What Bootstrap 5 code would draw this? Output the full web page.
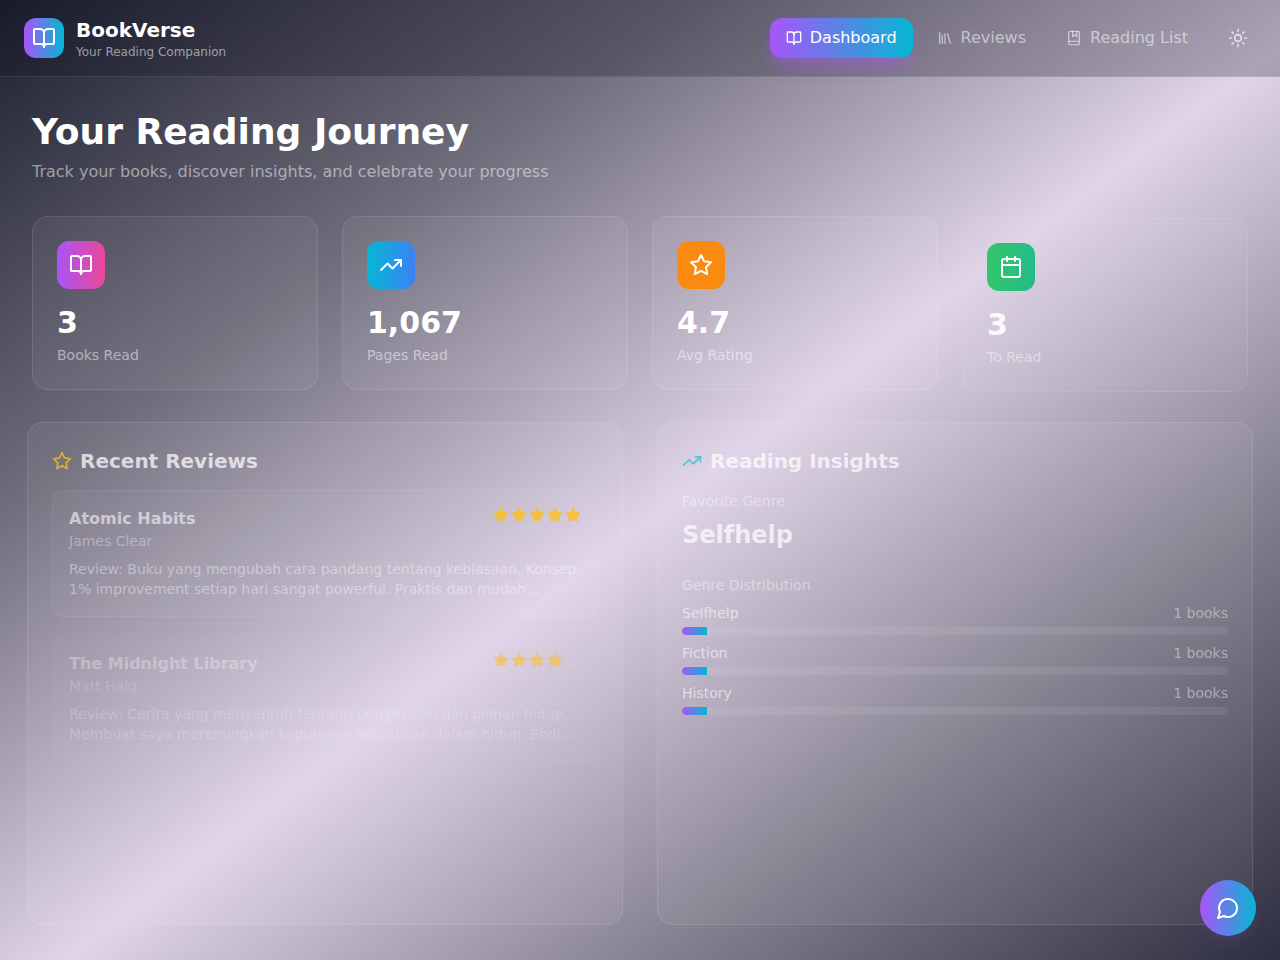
<!DOCTYPE html>
<html lang="en">
<head>
    <meta charset="UTF-8">
    <meta name="viewport" content="width=device-width, initial-scale=1.0">
    <title>BookVerse</title>
    <link href="https://cdn.jsdelivr.net/npm/bootstrap@5.3.0/dist/css/bootstrap.min.css" rel="stylesheet">
    <style>
        html, body { height: 100%; }
        body {
            font-family: "DejaVu Sans", sans-serif;
            color: #fff;
            min-height: 960px;
            overflow: hidden;
            background: linear-gradient(to bottom right, #1c1f2e 0%, #716e7d 27%, #e0d4e8 52.5%, #868291 75%, #2d2e40 100%);
        }
        .ico { fill: none; stroke: currentColor; stroke-width: 2; stroke-linecap: round; stroke-linejoin: round; flex-shrink: 0; }
        .top-bar {
            height: 77px;
            padding: 0 24px;
            background: rgba(15, 15, 30, .25);
            border-bottom: 1px solid rgba(255, 255, 255, .1);
        }
        .logo-box { width: 40px; height: 40px; border-radius: 12px; background: linear-gradient(90deg, #a855f7, #06b6d4); }
        .brand-name { font-size: 20px; font-weight: 700; line-height: 28px; }
        .brand-sub { font-size: 12px; line-height: 16px; color: rgba(255, 255, 255, .55); }
        .top-bar .nav-link {
            height: 40px;
            padding: 0 16px;
            border-radius: 12px;
            font-size: 16px;
            color: rgba(255, 255, 255, .55);
        }
        .top-bar .nav-link.active {
            color: #fff;
            background: linear-gradient(90deg, #a855f7, #06b6d4);
            box-shadow: 0 10px 15px -3px rgba(168, 85, 247, .5);
        }
        .theme-btn { width: 36px; height: 36px; margin-left: 8px; color: rgba(255, 255, 255, .7); }
        .page-main { padding: 32px 32px 35px; }
        .page-title { font-size: 36px; line-height: 45px; font-weight: 700; margin-bottom: 6px; }
        .page-sub { font-size: 16px; line-height: 24px; color: rgba(255, 255, 255, .5); margin-bottom: 32px; }
        .glass-box {
            background: rgba(255, 255, 255, .05);
            border: 1px solid rgba(255, 255, 255, .1);
            border-radius: 16px;
        }
        .stat-box { padding: 24px; height: 174px; }
        .stat-late { transform: translateY(2px); opacity: .9; }
        .stat-ico { width: 48px; height: 48px; border-radius: 12px; margin-bottom: 16px; }
        .ico-purple { background: linear-gradient(90deg, #a855f7, #ec4899); }
        .ico-blue { background: linear-gradient(90deg, #06b6d4, #3b82f6); }
        .ico-orange { background: #fb8a10; }
        .ico-green { background: linear-gradient(90deg, #22c55e, #10b981); }
        .stat-value { font-size: 30px; line-height: 36px; font-weight: 700; margin-bottom: 4px; }
        .stat-label { font-size: 14px; line-height: 20px; color: rgba(255, 255, 255, .5); }
        .panel-row { margin-top: 32px; }
        .panel-box { padding: 24px; height: 503px; }
        .panel-left { transform: translateX(-5px); }
        .panel-right { transform: translateX(5px); }
        .panel-title { font-size: 20px; line-height: 28px; font-weight: 700; margin: 0 0 15px; color: rgba(255, 255, 255, .72); }
        .title-star { color: #fbbf24; opacity: .8; }
        .title-trend { color: #2bc4d4; opacity: .8; }
        .review-box {
            padding: 16px;
            height: 127px;
            margin-bottom: 18px;
            background: rgba(255, 255, 255, .03);
            border: 1px solid rgba(255, 255, 255, .06);
            border-radius: 12px;
        }
        .review-first { --txt: .56; --star: .85; }
        .review-second { --txt: .29; --star: .55; background: rgba(255, 255, 255, .015); border-color: rgba(255, 255, 255, .03); }
        .review-name { font-size: 16px; line-height: 24px; font-weight: 700; opacity: var(--txt); }
        .review-author { font-size: 14px; line-height: 20px; color: rgba(255, 255, 255, .6); margin-bottom: 8px; opacity: var(--txt); }
        .review-text { font-size: 14px; line-height: 20px; color: rgba(255, 255, 255, .7); margin: 0; opacity: var(--txt); }
        .star-row { gap: 2px; opacity: var(--star); }
        .star-on { color: #fbbf24; fill: #fbbf24; }
        .star-off { color: rgba(255, 255, 255, .12); }
        .small-label { font-size: 14px; line-height: 20px; color: rgba(255, 255, 255, .42); }
        .insight-top { margin-top: 16px; }
        .genre-fav { font-size: 24px; line-height: 32px; font-weight: 700; margin: 8px 0 24px; color: rgba(255, 255, 255, .72); }
        .genre-line { font-size: 14px; line-height: 20px; }
        .genre-name { color: rgba(255, 255, 255, .58); }
        .genre-count { color: rgba(255, 255, 255, .42); }
        .genre-track { height: 8px; border-radius: 4px; overflow: hidden; background: rgba(255, 255, 255, .08); margin: 4px 0 8px; }
        .genre-fill { height: 100%; border-radius: 4px 0 0 4px; background: linear-gradient(90deg, #a855f7, #06b6d4); }
        .chat-fab {
            position: fixed;
            right: 24px;
            bottom: 24px;
            width: 56px;
            height: 56px;
            padding: 0;
            border: 0;
            border-radius: 50%;
            color: #fff;
            background: linear-gradient(90deg, #a855f7, #06b6d4);
            box-shadow: 0 10px 15px -3px rgba(168, 85, 247, .12);
        }
    </style>
</head>
<body>
    <svg width="0" height="0" class="position-absolute">
        <symbol id="i-book" viewBox="0 0 24 24"><path d="M12 7v14"/><path d="M3 18a1 1 0 0 1-1-1V4a1 1 0 0 1 1-1h5a4 4 0 0 1 4 4 4 4 0 0 1 4-4h5a1 1 0 0 1 1 1v13a1 1 0 0 1-1 1h-6a3 3 0 0 0-3 3 3 3 0 0 0-3-3z"/></symbol>
        <symbol id="i-library" viewBox="0 0 24 24"><path d="m16 6 4 14"/><path d="M12 6v14"/><path d="M8 8v12"/><path d="M4 4v16"/></symbol>
        <symbol id="i-marked" viewBox="0 0 24 24"><path d="M10 2v8l3-3 3 3V2"/><path d="M4 19.5v-15A2.5 2.5 0 0 1 6.5 2H19a1 1 0 0 1 1 1v18a1 1 0 0 1-1 1H6.5a1 1 0 0 1 0-5H20"/></symbol>
        <symbol id="i-sun" viewBox="0 0 24 24"><circle cx="12" cy="12" r="4"/><path d="M12 2v2"/><path d="M12 20v2"/><path d="m4.93 4.93 1.41 1.41"/><path d="m17.66 17.66 1.41 1.41"/><path d="M2 12h2"/><path d="M20 12h2"/><path d="m6.34 17.66-1.41 1.41"/><path d="m19.07 4.93-1.41 1.41"/></symbol>
        <symbol id="i-trend" viewBox="0 0 24 24"><polyline points="22 7 13.5 15.5 8.5 10.5 2 17"/><polyline points="16 7 22 7 22 13"/></symbol>
        <symbol id="i-star" viewBox="0 0 24 24"><polygon points="12 2 15.09 8.26 22 9.27 17 14.14 18.18 21.02 12 17.77 5.82 21.02 7 14.14 2 9.27 8.91 8.26 12 2"/></symbol>
        <symbol id="i-cal" viewBox="0 0 24 24"><path d="M8 2v4"/><path d="M16 2v4"/><rect width="18" height="18" x="3" y="4" rx="2"/><path d="M3 10h18"/></symbol>
        <symbol id="i-chat" viewBox="0 0 24 24"><path d="M7.9 20A9 9 0 1 0 4 16.1L2 22Z"/></symbol>
    </svg>

    <header class="top-bar d-flex align-items-center justify-content-between">
        <div class="d-flex align-items-center gap-2">
            <div class="logo-box d-flex align-items-center justify-content-center me-1">
                <svg class="ico" width="24" height="24"><use href="#i-book"/></svg>
            </div>
            <div>
                <div class="brand-name">BookVerse</div>
                <div class="brand-sub">Your Reading Companion</div>
            </div>
        </div>
        <nav class="nav align-items-center gap-2">
            <a class="nav-link active d-flex align-items-center gap-2" href="#"><svg class="ico" width="16" height="16"><use href="#i-book"/></svg>Dashboard</a>
            <a class="nav-link d-flex align-items-center gap-2" href="#"><svg class="ico" width="16" height="16"><use href="#i-library"/></svg>Reviews</a>
            <a class="nav-link d-flex align-items-center gap-2" href="#"><svg class="ico" width="16" height="16"><use href="#i-marked"/></svg>Reading List</a>
            <div class="theme-btn d-flex align-items-center justify-content-center"><svg class="ico" width="20" height="20"><use href="#i-sun"/></svg></div>
        </nav>
    </header>

    <main class="page-main">
        <h1 class="page-title">Your Reading Journey</h1>
        <p class="page-sub">Track your books, discover insights, and celebrate your progress</p>

        <div class="row g-4">
            <div class="col-3">
                <div class="glass-box stat-box">
                    <div class="stat-ico ico-purple d-flex align-items-center justify-content-center"><svg class="ico" width="24" height="24"><use href="#i-book"/></svg></div>
                    <div class="stat-value">3</div>
                    <div class="stat-label">Books Read</div>
                </div>
            </div>
            <div class="col-3">
                <div class="glass-box stat-box">
                    <div class="stat-ico ico-blue d-flex align-items-center justify-content-center"><svg class="ico" width="24" height="24"><use href="#i-trend"/></svg></div>
                    <div class="stat-value">1,067</div>
                    <div class="stat-label">Pages Read</div>
                </div>
            </div>
            <div class="col-3">
                <div class="glass-box stat-box">
                    <div class="stat-ico ico-orange d-flex align-items-center justify-content-center"><svg class="ico" width="24" height="24"><use href="#i-star"/></svg></div>
                    <div class="stat-value">4.7</div>
                    <div class="stat-label">Avg Rating</div>
                </div>
            </div>
            <div class="col-3">
                <div class="glass-box stat-box stat-late">
                    <div class="stat-ico ico-green d-flex align-items-center justify-content-center"><svg class="ico" width="24" height="24"><use href="#i-cal"/></svg></div>
                    <div class="stat-value">3</div>
                    <div class="stat-label">To Read</div>
                </div>
            </div>

            <div class="col-6 panel-row">
                <div class="glass-box panel-box panel-left">
                    <h2 class="panel-title d-flex align-items-center gap-2"><svg class="ico title-star" width="20" height="20"><use href="#i-star"/></svg>Recent Reviews</h2>
                    <div id="review-list"></div>
                </div>
            </div>
            <div class="col-6 panel-row">
                <div class="glass-box panel-box panel-right">
                    <h2 class="panel-title d-flex align-items-center gap-2"><svg class="ico title-trend" width="20" height="20"><use href="#i-trend"/></svg>Reading Insights</h2>
                    <div class="small-label insight-top">Favorite Genre</div>
                    <div class="genre-fav">Selfhelp</div>
                    <div class="small-label mb-2">Genre Distribution</div>
                    <div id="genre-list"></div>
                </div>
            </div>
        </div>
    </main>

    <button class="chat-fab d-flex align-items-center justify-content-center" type="button"><svg class="ico" width="24" height="24"><use href="#i-chat"/></svg></button>

    <script>
        const reviews = [
            { name: 'Atomic Habits', author: 'James Clear', rating: 5, cls: 'review-first', text: 'Review: Buku yang mengubah cara pandang tentang kebiasaan. Konsep 1% improvement setiap hari sangat powerful. Praktis dan mudah...' },
            { name: 'The Midnight Library', author: 'Matt Haig', rating: 4, cls: 'review-second', text: 'Review: Cerita yang menyentuh tentang penyesalan dan pilihan hidup. Membuat saya merenungkan keputusan keputusan dalam hidup. Endi...' }
        ];
        const genres = ['Selfhelp', 'Fiction', 'History'];

        document.getElementById('review-list').innerHTML = reviews.map(r => {
            let stars = '';
            for (let i = 0; i < 5; i++) {
                stars += `<svg class="ico ${i < r.rating ? 'star-on' : 'star-off'}" width="16" height="16"><use href="#i-star"/></svg>`;
            }
            return `
                <div class="review-box ${r.cls}">
                    <div class="d-flex justify-content-between align-items-start">
                        <div class="review-name">${r.name}</div>
                        <div class="star-row d-flex">${stars}</div>
                    </div>
                    <div class="review-author">${r.author}</div>
                    <p class="review-text">${r.text}</p>
                </div>`;
        }).join('');

        document.getElementById('genre-list').innerHTML = genres.map(g => `
            <div class="genre-line d-flex justify-content-between"><span class="genre-name">${g}</span><span class="genre-count">1 books</span></div>
            <div class="genre-track"><div class="genre-fill" style="width: 4.6%"></div></div>`).join('');
    </script>
    <script src="https://cdn.jsdelivr.net/npm/bootstrap@5.3.0/dist/js/bootstrap.bundle.min.js"></script>
</body>
</html>
